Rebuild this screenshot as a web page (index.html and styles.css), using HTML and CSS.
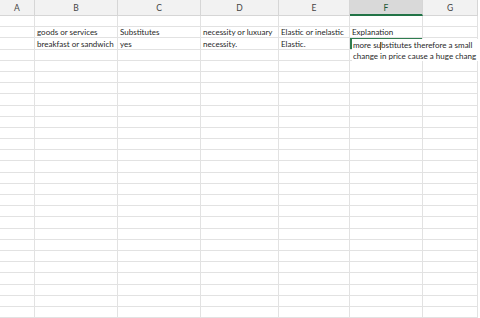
FILE: index.html
```html
<!DOCTYPE html>
<html lang="en">
<head>
    <meta charset="UTF-8">
    <title>Sheet1</title>
    <link rel="stylesheet" href="styles.css">
</head>
<body>
    <table class="sheet">
        <colgroup>
            <col class="col-a"><col class="col-b"><col class="col-c"><col class="col-d"><col class="col-e"><col class="col-f"><col class="col-g">
        </colgroup>
        <thead>
            <tr><th>A</th><th>B</th><th>C</th><th>D</th><th>E</th><th class="active">F</th><th>G</th></tr>
        </thead>
        <tbody>
            <tr><td></td><td></td><td></td><td></td><td></td><td></td><td></td></tr>
            <tr><td></td><td>goods or services</td><td>Substitutes</td><td>necessity or luxuary</td><td>Elastic or inelastic</td><td>Explanation</td><td></td></tr>
            <tr><td></td><td>breakfast or sandwich</td><td>yes</td><td>necessity.</td><td>Elastic.</td>
                <td class="selected">
                    <div class="editor">more substitutes therefore a small<br>change in price cause a huge chang<span class="ibeam"></span></div>
                </td><td></td></tr>
            <tr><td></td><td></td><td></td><td></td><td></td><td></td><td></td></tr>
            <tr><td></td><td></td><td></td><td></td><td></td><td></td><td></td></tr>
            <tr><td></td><td></td><td></td><td></td><td></td><td></td><td></td></tr>
            <tr><td></td><td></td><td></td><td></td><td></td><td></td><td></td></tr>
            <tr><td></td><td></td><td></td><td></td><td></td><td></td><td></td></tr>
            <tr><td></td><td></td><td></td><td></td><td></td><td></td><td></td></tr>
            <tr><td></td><td></td><td></td><td></td><td></td><td></td><td></td></tr>
            <tr><td></td><td></td><td></td><td></td><td></td><td></td><td></td></tr>
            <tr><td></td><td></td><td></td><td></td><td></td><td></td><td></td></tr>
            <tr><td></td><td></td><td></td><td></td><td></td><td></td><td></td></tr>
            <tr><td></td><td></td><td></td><td></td><td></td><td></td><td></td></tr>
            <tr><td></td><td></td><td></td><td></td><td></td><td></td><td></td></tr>
            <tr><td></td><td></td><td></td><td></td><td></td><td></td><td></td></tr>
            <tr><td></td><td></td><td></td><td></td><td></td><td></td><td></td></tr>
            <tr><td></td><td></td><td></td><td></td><td></td><td></td><td></td></tr>
            <tr><td></td><td></td><td></td><td></td><td></td><td></td><td></td></tr>
            <tr><td></td><td></td><td></td><td></td><td></td><td></td><td></td></tr>
            <tr><td></td><td></td><td></td><td></td><td></td><td></td><td></td></tr>
            <tr><td></td><td></td><td></td><td></td><td></td><td></td><td></td></tr>
            <tr><td></td><td></td><td></td><td></td><td></td><td></td><td></td></tr>
            <tr><td></td><td></td><td></td><td></td><td></td><td></td><td></td></tr>
            <tr><td></td><td></td><td></td><td></td><td></td><td></td><td></td></tr>
            <tr><td></td><td></td><td></td><td></td><td></td><td></td><td></td></tr>
            <tr><td></td><td></td><td></td><td></td><td></td><td></td><td></td></tr>
            <tr><td></td><td></td><td></td><td></td><td></td><td></td><td></td></tr>
        </tbody>
    </table>
</body>
</html>
```

FILE: styles.css
```css
body { margin: 0; background: #fff; font-family: 'Lato', 'Liberation Sans', sans-serif; color: #1f1f1f; overflow: hidden; }
.sheet { border-collapse: separate; border-spacing: 0; table-layout: fixed; width: 478px; }
.col-a { width: 35px; }
.col-b { width: 83px; }
.col-c { width: 83px; }
.col-d { width: 78px; }
.col-e { width: 71px; }
.col-f { width: 73px; }
.col-g { width: 55px; }
th, td { box-sizing: border-box; border-right: 1px solid #e2e2e2; border-bottom: 1px solid #e2e2e2; padding: 0 0 0 2px; white-space: nowrap; overflow: visible; }
th { height: 16px; background: #f2f2f2; border-color: #d6d6d6; font-weight: normal; font-size: 8.5px; color: #444; text-align: center; padding: 1px 0 0; }
th.active { background: #d9d9d9; color: #1e5a36; border-bottom: 2px solid #217346; }
td { height: 11.2px; font-size: 8px; line-height: 10px; vertical-align: bottom; }
td.selected { position: relative; box-shadow: inset 2px 2px 0 #2f7d50; }
.editor { position: absolute; left: 2px; top: 1px; width: 127px; height: 22px; background: #fff; white-space: nowrap; line-height: 11px; padding: 1px 0 0 1px; box-sizing: border-box; z-index: 1; overflow: hidden; }
.ibeam { position: absolute; left: 28px; top: 3px; width: 1px; height: 8px; background: #6b5a3a; }
```
